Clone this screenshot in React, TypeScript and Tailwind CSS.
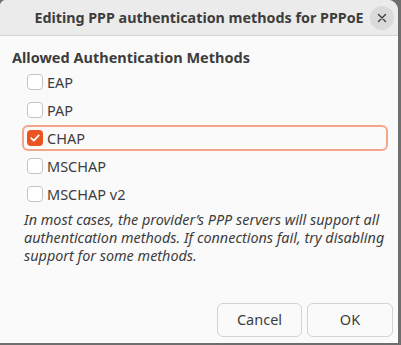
import React from 'react';

const methods = [
  { label: 'EAP', checked: false },
  { label: 'PAP', checked: false },
  { label: 'CHAP', checked: true, focused: true },
  { label: 'MSCHAP', checked: false },
  { label: 'MSCHAP v2', checked: false },
];

function CheckRow({ label, checked, focused }: { label: string; checked: boolean; focused?: boolean }) {
  return (
    <div
      className={`flex h-[26px] w-[366px] items-center gap-[4px] rounded-[6px] border-2 pl-[3px] ${
        focused ? 'border-[#f3a68a]' : 'border-transparent'
      }`}
    >
      {checked ? (
        <span className="flex h-[16px] w-[16px] items-center justify-center rounded-[4px] bg-[#e95420]">
          <svg width="12" height="12" viewBox="0 0 12 12" fill="none">
            <path d="M2.2 6.2 L4.8 8.6 L9.8 3.4" stroke="#fff" strokeWidth="1.8" strokeLinecap="round" strokeLinejoin="round" />
          </svg>
        </span>
      ) : (
        <span className="h-[16px] w-[16px] rounded-[4px] border border-[#c4c4c4] bg-white" />
      )}
      <span className="text-[14.5px] leading-[18px] text-[#3d3d3d]">{label}</span>
    </div>
  );
}

export default function App() {
  return (
    <div
      className="flex h-[345px] w-[401px] bg-[#6e6e6e]"
      style={{ fontFamily: '"Noto Sans", "Open Sans", sans-serif' }}
    >
      <div className="flex h-[343px] w-[398px] flex-col overflow-hidden rounded-tl-[6px] rounded-tr-[10px] bg-[#fafafa]">
        {/* header bar */}
        <div className="grid h-[36px] shrink-0 grid-cols-[1fr_auto_1fr] items-center border-b border-[#d5d5d5] bg-[#ebebeb]">
          <div />
          <div className="text-[14.3px] font-bold leading-[18px] text-[#3d3d3d]">Editing PPP authentication methods for PPPoE</div>
          <div className="flex justify-end pr-[4px]">
            <button className="flex h-[24px] w-[24px] items-center justify-center rounded-full bg-[#dadada]">
              <svg width="10" height="10" viewBox="0 0 10 10">
                <path d="M1.5 1.5 L8.5 8.5 M8.5 1.5 L1.5 8.5" stroke="#3d3d3d" strokeWidth="1.4" strokeLinecap="round" />
              </svg>
            </button>
          </div>
        </div>

        {/* body */}
        <div className="flex flex-1 flex-col pl-[12px] pt-[12px]">
          <div className="text-[14.5px] font-bold leading-[18px] text-[#3d3d3d]">Allowed Authentication Methods</div>
          <div className="mt-[3px] flex flex-col gap-[2px] pl-[10px]">
            {methods.map((m) => (
              <CheckRow key={m.label} label={m.label} checked={m.checked} focused={m.focused} />
            ))}
          </div>
          <p className="mt-[4px] pl-[12px] text-[14.4px] italic leading-[18px] text-[#3d3d3d]">
            In most cases, the provider’s PPP servers will support all
            <br />
            authentication methods. If connections fail, try disabling
            <br />
            support for some methods.
          </p>
        </div>

        {/* buttons */}
        <div className="flex justify-end gap-[5px] pb-[6px] pr-[5px]">
          <button className="h-[34px] w-[85px] rounded-[6px] border border-[#d3d3d3] bg-[#fafafa] text-[14.5px] text-[#3d3d3d]">Cancel</button>
          <button className="h-[34px] w-[86px] rounded-[6px] border border-[#d3d3d3] bg-[#fafafa] text-[14.5px] text-[#3d3d3d]">OK</button>
        </div>
      </div>
    </div>
  );
}
